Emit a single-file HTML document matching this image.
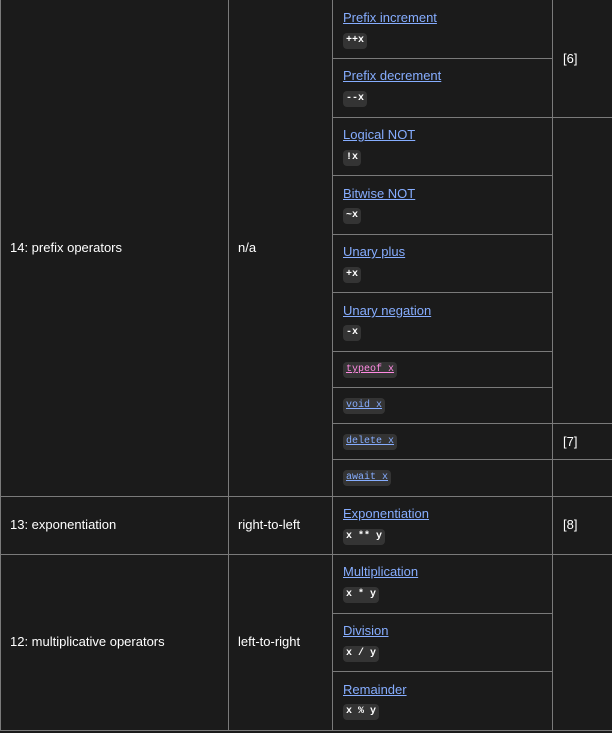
<!DOCTYPE html>
<html><head><meta charset="utf-8"><style>
html,body{margin:0;padding:0;background:#1b1b1b;width:612px;height:733px;overflow:hidden;font-family:"Liberation Sans",sans-serif;font-size:13px;color:#fff}
.h{position:absolute;height:1px;background:#7a7a7a}
.v{position:absolute;width:1px;background:#7a7a7a}
.t{position:absolute;white-space:nowrap;line-height:16px}
a{color:#86adff;text-decoration:underline}
code{position:absolute;font-family:"Liberation Mono",monospace;font-size:10px;font-weight:bold;background:#343434;border-radius:4px;padding:0 3px;line-height:16px;color:#fff;white-space:pre}
code.l{color:#86adff;text-decoration:underline;font-weight:normal}
code.p{color:#ff8ae2;text-decoration:underline;font-weight:normal}
</style></head><body>
<div class="v" style="left:0;top:0;height:731px"></div>
<div class="v" style="left:228px;top:0;height:731px"></div>
<div class="v" style="left:332px;top:0;height:731px"></div>
<div class="v" style="left:552px;top:0;height:731px"></div>
<div class="h" style="left:332px;width:220px;top:58px"></div>
<div class="h" style="left:332px;width:280px;top:117px"></div>
<div class="h" style="left:332px;width:220px;top:175px"></div>
<div class="h" style="left:332px;width:220px;top:234px"></div>
<div class="h" style="left:332px;width:220px;top:292px"></div>
<div class="h" style="left:332px;width:220px;top:351px"></div>
<div class="h" style="left:332px;width:220px;top:387px"></div>
<div class="h" style="left:332px;width:280px;top:423px"></div>
<div class="h" style="left:332px;width:280px;top:459px"></div>
<div class="h" style="left:0;width:612px;top:496px"></div>
<div class="h" style="left:0;width:612px;top:554px"></div>
<div class="h" style="left:332px;width:220px;top:613px"></div>
<div class="h" style="left:332px;width:220px;top:671px"></div>
<div class="h" style="left:0;width:612px;top:730px"></div>

<div class="t" style="left:10px;top:240px">14: prefix operators</div>
<div class="t" style="left:238px;top:240px">n/a</div>
<div class="t" style="left:10px;top:517px">13: exponentiation</div>
<div class="t" style="left:238px;top:517px">right-to-left</div>
<div class="t" style="left:10px;top:634px">12: multiplicative operators</div>
<div class="t" style="left:238px;top:634px">left-to-right</div>
<div class="t" style="left:563px;top:51px">[6]</div>
<div class="t" style="left:563px;top:434px">[7]</div>
<div class="t" style="left:563px;top:517px">[8]</div>

<div class="t" style="left:343px;top:10px"><a>Prefix increment</a></div><code style="left:343px;top:33px">++x</code>
<div class="t" style="left:343px;top:68px"><a>Prefix decrement</a></div><code style="left:343px;top:91px">--x</code>
<div class="t" style="left:343px;top:127px"><a>Logical NOT</a></div><code style="left:343px;top:150px">!x</code>
<div class="t" style="left:343px;top:186px"><a>Bitwise NOT</a></div><code style="left:343px;top:208px">~x</code>
<div class="t" style="left:343px;top:244px"><a>Unary plus</a></div><code style="left:343px;top:267px">+x</code>
<div class="t" style="left:343px;top:303px"><a>Unary negation</a></div><code style="left:343px;top:325px">-x</code>
<code class="p" style="left:343px;top:362px">typeof x</code>
<code class="l" style="left:343px;top:398px">void x</code>
<code class="l" style="left:343px;top:434px">delete x</code>
<code class="l" style="left:343px;top:470px">await x</code>
<div class="t" style="left:343px;top:506px"><a>Exponentiation</a></div><code style="left:343px;top:529px">x ** y</code>
<div class="t" style="left:343px;top:564px"><a>Multiplication</a></div><code style="left:343px;top:587px">x * y</code>
<div class="t" style="left:343px;top:623px"><a>Division</a></div><code style="left:343px;top:646px">x / y</code>
<div class="t" style="left:343px;top:682px"><a>Remainder</a></div><code style="left:343px;top:704px">x % y</code>
</body></html>
